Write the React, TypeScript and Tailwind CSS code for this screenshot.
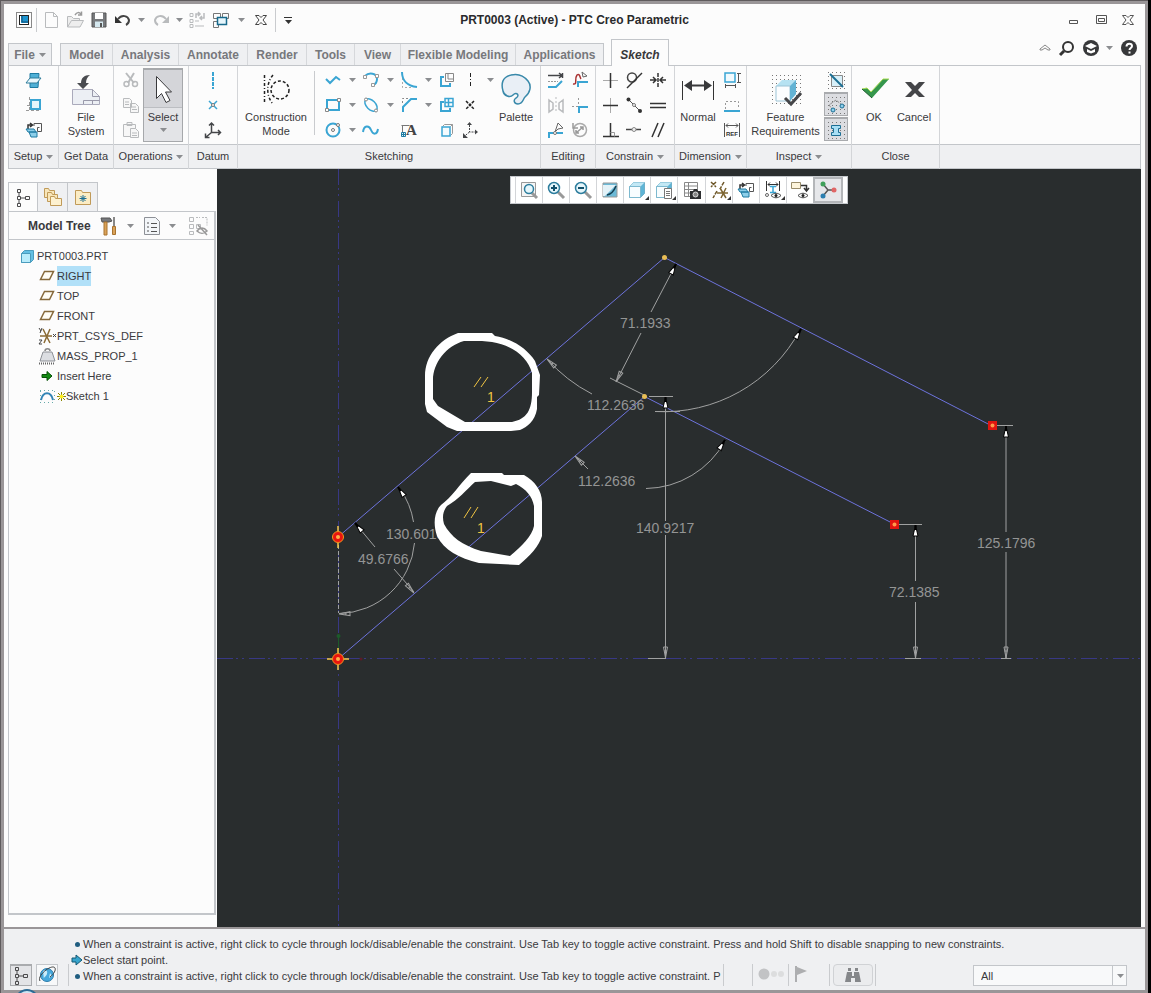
import type { ReactNode } from 'react';
import clsx from 'clsx';

interface ToolProps {
  label: string;
  children: ReactNode;
  className?: string;
}

const BLUE = '#3aa5d3';
const DARK = '#444649';
const PALE = '#b9bbbd';

function Glyph({ children, size = 20 }: { children: ReactNode; size?: number }) {
  return (
    <svg width={size} height={size} viewBox={`0 0 ${size} ${size}`} fill="none" aria-hidden="true" className="shrink-0">
      {children}
    </svg>
  );
}

function Tool({ label, children, className }: ToolProps) {
  return (
    <button type="button" aria-label={label} className={clsx('flex shrink-0 items-center justify-center', className)}>
      <Glyph>{children}</Glyph>
    </button>
  );
}

function Triangle({ dark }: { dark?: boolean }) {
  return (
    <svg width="7" height="4" viewBox="0 0 7 4" aria-hidden="true" className="shrink-0">
      <path d="M0 0h7L3.500 4z" fill={dark ? '#333' : '#8b8d90'} />
    </svg>
  );
}

function Caret({ label, dark, className }: { label: string; dark?: boolean; className?: string }) {
  return (
    <button type="button" aria-label={label} className={clsx('flex shrink-0 items-center justify-center', className ?? 'w-4')}>
      <Triangle dark={dark} />
    </button>
  );
}

function Divider({ className }: { className?: string }) {
  return <span className={clsx('w-px shrink-0 bg-[#c9cbce]', className)} />;
}

function QuickAccess() {
  return (
    <div className="flex h-8 items-center pl-2">
      <Tool label="Application" className="w-6">
        <rect x="2.500" y="2.500" width="15" height="15" stroke="#888" />
        <rect x="5.500" y="5.500" width="9" height="9" fill="#fff" stroke="#222" />
        <path d="M8 6h6v7H7V6z" fill="#1d94cf" />
        <path d="M8 6v6h6" stroke="#124d74" />
      </Tool>
      <Divider className="h-6" />
      <Tool label="New" className="ml-0.5 w-6">
        <path d="M4.500 2.500h8l4 4v11h-12zM12.500 2.500v4h4" stroke={PALE} />
      </Tool>
      <Tool label="Open" className="w-6">
        <path d="M2.500 17V6.500h4l2 2h6V11M2.500 17l4-6.500h12L15 17z" fill="#eee" stroke={PALE} />
        <path d="M10 5c2-3 4-3 6-1M16.500 1.500V5H13" stroke="#999" strokeWidth="1.500" />
      </Tool>
      <Tool label="Save" className="w-6">
        <path d="M3 3h14v14H3z" fill="#77797c" stroke="#555" />
        <path d="M6 3h8v6H6z" fill="#fff" />
        <path d="M6 11.500h8V17H6z" fill="#d5e8ef" />
        <path d="M11 13h2v4h-2z" fill="#555" />
      </Tool>
      <Tool label="Undo" className="w-6">
        <path d="M5 9C9 4 15 6 16 10c0 3-1 4-3 5" stroke="#444" strokeWidth="2" />
        <path d="M2 6v7h7z" fill="#333" />
      </Tool>
      <Caret label="Undo list" className="w-3" />
      <Tool label="Redo" className="ml-0.5 w-6">
        <path d="M15 9C11 4 5 6 4 10c0 3 1 4 3 5" stroke={PALE} strokeWidth="2" />
        <path d="M18 6v7h-7z" fill={PALE} />
      </Tool>
      <Caret label="Redo list" className="w-3" />
      <Tool label="Regenerate" className="w-6">
        <path d="M3 3.500h3v3H3zM3 9.500h3v3H3zM3 14.500h3v3H3zM8 11h4M8 16h9" stroke={PALE} />
        <path d="M9 8V4h4M11 2l2 2-2 2M17 3v5h-4M15 6l-2 2 2 2" stroke={PALE} strokeWidth="1.500" />
      </Tool>
      <Tool label="Windows" className="w-6">
        <path d="M2.500 3.500h7v5h-7zM11.500 3.500h6v5h-6zM2.500 11.500h5v6h-5z" stroke="#777" />
        <path d="M6.500 7.500h9v7h-9z" fill="#e6f6fc" stroke="#186a8c" strokeWidth="1.500" />
      </Tool>
      <Caret label="Window list" className="w-4" />
      <Tool label="Close window" className="w-6">
        <path d="M4.500 5.500h3.500l2 2 2-2h3.500l-3.500 4.500 3.500 4.500H12l-2-2-2 2H4.500L8 10z" stroke="#444" />
      </Tool>
      <Divider className="ml-0.5 h-6" />
      <button type="button" aria-label="Customize toolbar" className="flex w-6 flex-col items-center gap-0.5">
        <span className="h-px w-2 bg-[#333]" />
        <Triangle dark />
      </button>
    </div>
  );
}

function TitleBar() {
  return (
    <header className="grid h-8 grid-cols-[1fr_auto_1fr] items-center">
      <QuickAccess />
      <h1 className="text-[12px] leading-4 font-bold text-[#2a2a2c]">PRT0003 (Active) - PTC Creo Parametric</h1>
      <div className="flex items-center justify-end pr-1">
        <Tool label="Minimize" className="w-[27px]">
          <path d="M5.500 10.500h8v3h-8z" stroke="#555" />
        </Tool>
        <Tool label="Maximize" className="w-[27px]">
          <path d="M5.500 5.500h10v8h-10zM7.500 8.500h6v3h-6z" stroke="#555" />
        </Tool>
        <Tool label="Close" className="w-[27px]">
          <path d="M4.500 5.500h3.500l2 2 2-2h3.500l-3.500 4.500 3.500 4.500H12l-2-2-2 2H4.500L8 10z" stroke="#555" />
        </Tool>
      </div>
    </header>
  );
}

const tabs = [
  { name: 'Model', width: 'w-[52px]' },
  { name: 'Analysis', width: 'w-[66px]' },
  { name: 'Annotate', width: 'w-[69px]' },
  { name: 'Render', width: 'w-[59px]' },
  { name: 'Tools', width: 'w-[48px]' },
  { name: 'View', width: 'w-[46px]' },
  { name: 'Flexible Modeling', width: 'w-[115px]' },
  { name: 'Applications', width: 'w-[87px]' },
];

function TabStrip() {
  return (
    <div className="flex h-[29px] items-end pl-1 text-[12px] font-bold text-[#77787c]">
      <button type="button" className="flex h-[22px] w-11 items-center justify-center gap-1 border border-b-0 border-[#c3c6ca] bg-[#eff0f2]">
        File <Triangle />
      </button>
      <nav className="ml-2 flex h-[22px] border border-b-0 border-[#c3c6ca]">
        {tabs.map((tab) => (
          <button
            key={tab.name}
            type="button"
            className={clsx(tab.width, 'shrink-0 border-r border-[#d6d8db] bg-[#eff0f2] whitespace-nowrap last:border-r-0')}
          >
            {tab.name}
          </button>
        ))}
      </nav>
      <button
        type="button"
        className="z-10 -mb-px ml-[7px] h-[27px] w-[58px] border border-b-0 border-[#c3c6ca] bg-[#fcfcfc] pt-1 text-[#38383a] italic"
      >
        Sketch
      </button>
      <div className="ml-auto flex h-6 self-start pr-1">
        <Tool label="Collapse ribbon" className="w-5">
          <path d="M5 11l5-4 5 4v1h-2l-3-2-3 2H5z" stroke="#888" />
        </Tool>
        <Tool label="Search" className="w-6">
          <circle cx="11" cy="9" r="5" stroke="#333" strokeWidth="2" />
          <path d="M7 13l-4 4" stroke="#333" strokeWidth="3" />
        </Tool>
        <Tool label="Learning" className="w-6">
          <circle cx="10" cy="10" r="8" fill="#37383a" />
          <path d="M4 8l6-3 6 3-6 3zM6 11l4 2 4-2v3l-4 1.500L6 14z" fill="#fff" />
        </Tool>
        <Caret label="Learning menu" className="w-3" />
        <Tool label="Help" className="ml-0.5 w-6">
          <circle cx="10" cy="10" r="8" fill="#37383a" />
          <path d="M7.500 8.500c0-4 5.500-3.500 5.500-.5 0 2-2.500 2-2.500 4" stroke="#fff" strokeWidth="2" />
          <path d="M9.500 13.500h2v2h-2z" fill="#fff" />
        </Tool>
      </div>
    </div>
  );
}

interface GroupProps {
  name: string;
  width: string;
  menu?: boolean;
  children: ReactNode;
}

function Group({ name, width, menu, children }: GroupProps) {
  return (
    <section aria-label={name} className={clsx(width, 'flex shrink-0 flex-col border-r border-[#d3d5d8]')}>
      <div className="flex h-[78px] pt-px">{children}</div>
      <footer className="flex h-[25px] items-center justify-center gap-1 border-y border-[#c3c6ca] bg-[#eff0f2]">
        {name}
        {menu && <Triangle />}
      </footer>
    </section>
  );
}

function Stack({ children, className = 'w-6' }: { children: ReactNode; className?: string }) {
  return <div className={clsx('grid shrink-0 auto-rows-[25px]', className)}>{children}</div>;
}

interface BigToolProps {
  label: string;
  lines: string[];
  width: string;
  children: ReactNode;
}

function BigTool({ label, lines, width, children }: BigToolProps) {
  return (
    <button type="button" aria-label={label} className={clsx(width, 'flex shrink-0 flex-col items-center leading-[14px]')}>
      <span className="flex h-[43px] items-center">
        <Glyph size={36}>{children}</Glyph>
      </span>
      {lines.map((line) => (
        <span key={line}>{line}</span>
      ))}
    </button>
  );
}

function LayerGlyph() {
  return (
    <>
      <path d="M10 3.500h7.500v8h-4v-4h2M10 3.500v2.500" stroke="#555" />
      <path d="M4 9V5h4M6 3l2.500 2L6 7" stroke="#333" strokeWidth="1.500" />
      <path d="M2 9h8l2 3H4zM5 12h8v5H7z" fill="#8dcfea" stroke="#1e7ba2" />
    </>
  );
}

function SetupGroup() {
  return (
    <Group name="Setup" width="w-[50px]" menu>
      <Stack className="w-full justify-center">
        <Tool label="Sketch setup">
          <path d="M6 3.500h9l-1 14H6z" fill="#4fb0d6" stroke="#1e7ba2" />
          <path d="M2 13l4-5h11l-4 5z" fill="#e9f8fd" stroke="#2f7c9b" />
        </Tool>
        <Tool label="References">
          <path d="M3 10.500h14M2 15.500h14M5.500 2v14" stroke="#999" strokeDasharray="3 2" />
          <path d="M7 5h9v9H7z" fill="#e4f5fb" stroke={BLUE} strokeWidth="2" />
        </Tool>
        <Tool label="Sketch view">
          <LayerGlyph />
        </Tool>
      </Stack>
    </Group>
  );
}

function GetDataGroup() {
  return (
    <Group name="Get Data" width="w-[55px]">
      <BigTool label="File System" lines={['File', 'System']} width="w-full">
        <path d="M4.500 18.500h20l7 7v8h-27z" fill="#eceff4" stroke="#aab" />
        <path d="M24.500 18.500v7h7M15.500 33v-3.500h16M24.500 30v3" stroke="#99a" />
        <path d="M22 4c-6 0-9 3-9 8H9l6 6 6-6h-3c0-3 1-6 4-8z" fill="#4a4c50" />
      </BigTool>
    </Group>
  );
}

function OperationsGroup() {
  return (
    <Group name="Operations" width="w-[75px]" menu>
      <Stack className="ml-[5px] w-6">
        <Tool label="Cut">
          <path d="M5 3l8 10M13 3L7 13" stroke={PALE} strokeWidth="2" />
          <circle cx="5.500" cy="14" r="2.500" stroke={PALE} strokeWidth="1.500" />
          <circle cx="14" cy="14" r="2.500" stroke={PALE} strokeWidth="1.500" />
        </Tool>
        <Tool label="Copy">
          <path d="M2.500 3.500h6l2 2v7h-8zM9.500 8.500h5l3 3v6h-8z" fill="#f7f7f7" stroke={PALE} />
          <path d="M11 12h4M11 14.500h5M4 7h4M4 9.500h4" stroke={PALE} />
        </Tool>
        <Tool label="Paste">
          <path d="M2.500 4.500h12v12h-12zM6 2.500h5v3H6z" fill="#f7f7f7" stroke={PALE} />
          <path d="M9.500 8.500h5l3 3v6h-8zM11 13h5M11 15.500h5" fill="#f7f7f7" stroke={PALE} />
        </Tool>
      </Stack>
      <button
        type="button"
        className="mt-px flex h-[74px] w-10 flex-col items-center border border-t-2 border-[#a6a8ab] bg-[#e3e4e7]"
      >
        <span className="flex h-[38px] w-full items-center justify-center border-b border-[#bcbec2] bg-[#d4d5d9]">
          <Glyph size={32}>
            <path d="M9.500 3.500v22l5-5 4.500 9 4-2-4.500-8.500h6z" fill="#fff" stroke="#3a3a3c" />
          </Glyph>
        </span>
        <span className="mt-0.5 mb-1 leading-[14px]">Select</span>
        <Triangle />
      </button>
    </Group>
  );
}

function DatumGroup() {
  return (
    <Group name="Datum" width="w-[49px]">
      <Stack className="w-full justify-center">
        <Tool label="Datum centerline">
          <path d="M10 2v17" stroke={BLUE} strokeWidth="2" strokeDasharray="4 1" />
        </Tool>
        <Tool label="Datum point">
          <path d="M6 6l8 8M14 6l-8 8" stroke={BLUE} strokeWidth="1.500" />
          <circle cx="10" cy="10" r="1.500" fill="#fff" stroke="#777" />
        </Tool>
        <Tool label="Datum coordinate system">
          <path d="M8.500 3v9.500H17M8.500 12.500l-6 5M6 5.500L8.500 3 11 5.500M15 10l2.500 2.500L15 15M2.500 13.500v4h4" stroke={DARK} strokeWidth="1.500" />
        </Tool>
      </Stack>
    </Group>
  );
}

function SketchingGroup() {
  const cell = 'w-[22px]';
  return (
    <Group name="Sketching" width="w-[303px]">
      <BigTool label="Construction Mode" lines={['Construction', 'Mode']} width="w-[76px]">
        <path d="M6.500 4v29M15 4C8 12 8 25 15 33" stroke="#222" strokeWidth="1.500" strokeDasharray="3 2 1 2" />
        <circle cx="22" cy="19" r="9" stroke="#222" strokeWidth="1.500" strokeDasharray="3 2" />
      </BigTool>
      <Divider className="mt-1 mr-[7px] h-16" />
      <div className="grid auto-rows-[25px] grid-cols-[22px_16px_22px_16px_22px_16px]">
        <Tool label="Line chain" className={cell}>
          <path d="M3 9l4 4 6-6 4 3" stroke={BLUE} strokeWidth="2" />
        </Tool>
        <Caret label="Line menu" />
        <Tool label="Arc" className={cell}>
          <path d="M4 6c4-4 12-3 12 3 0 3-1 5-4 6" stroke={BLUE} strokeWidth="2" />
          <path d="M2.500 8.500h3v-3h-3zM10.500 16.500h3v-3h-3zM14.500 7.500h3v-3h-3z" fill="#fff" stroke="#999" />
        </Tool>
        <Caret label="Arc menu" />
        <Tool label="Fillet" className={cell}>
          <path d="M3.500 8v9.500H12" stroke="#aaa" strokeDasharray="2 2" />
          <path d="M3 2c0 9 6 14 15 15" stroke={BLUE} strokeWidth="2" />
        </Tool>
        <Caret label="Fillet menu" />
        <Tool label="Rectangle" className={cell}>
          <path d="M4 5h12v10H4z" stroke={BLUE} strokeWidth="2" />
          <path d="M2.500 13.500h3v3h-3zM14.500 3.500h3v3h-3z" fill="#fff" stroke="#888" />
        </Tool>
        <Caret label="Rectangle menu" />
        <Tool label="Ellipse" className={cell}>
          <ellipse cx="10" cy="10" rx="7.500" ry="4.500" transform="rotate(45 10 10)" stroke={BLUE} strokeWidth="1.500" />
          <circle cx="5" cy="4.500" r="1.500" fill="#fff" stroke="#888" />
          <circle cx="15" cy="15.500" r="1.500" fill="#fff" stroke="#888" />
        </Tool>
        <Caret label="Ellipse menu" />
        <Tool label="Chamfer" className={cell}>
          <path d="M3.500 8V3.500H10" stroke="#888" strokeDasharray="2 2" />
          <path d="M4 17v-5l8-8h6" stroke={BLUE} strokeWidth="2" />
        </Tool>
        <Caret label="Chamfer menu" />
        <Tool label="Circle" className={cell}>
          <circle cx="10" cy="10" r="6.500" stroke={BLUE} strokeWidth="2" />
          <circle cx="10" cy="10" r="1.500" stroke="#777" />
          <circle cx="15" cy="5" r="1.500" fill="#fff" stroke="#777" />
        </Tool>
        <Caret label="Circle menu" />
        <Tool label="Spline" className={cell}>
          <path d="M2 12c1-7 6-7 8-2s6 5 7-1" stroke={BLUE} strokeWidth="2" />
        </Tool>
        <span />
        <Tool label="Text" className={cell}>
          <path d="M2.500 5.500h8M3.500 5v8" stroke="#777" />
          <text x="7" y="15" fill="#444" className="font-['Liberation_Serif',serif] text-[15px] font-bold">
            A
          </text>
          <path d="M2.500 12.500h4v4h-4zM4.500 12.500v4M2.500 14.500h4" fill="#dff3fa" stroke="#1e7ba2" />
        </Tool>
      </div>
      <Stack className={cell}>
        <Tool label="Offset" className={cell}>
          <path d="M8.500 3.500h8v8h-8zM11 3.500V9h5.500" stroke="#888" />
          <path d="M7 7H4v9h9v-3" stroke={BLUE} strokeWidth="2" />
        </Tool>
        <Tool label="Thicken" className={cell}>
          <path d="M8 3.500h8v8H8zM11.500 4v7M8 7.500h8" stroke={BLUE} strokeWidth="1.500" />
          <path d="M7 7H4v9h9v-3" stroke={BLUE} strokeWidth="2" />
        </Tool>
        <Tool label="Project" className={cell}>
          <path d="M5.500 6.500l2-2h8v9l-2 2M13.500 6.500l2-2" stroke="#999" />
          <path d="M5 7h8v9H5z" fill="#f4fbfe" stroke={BLUE} strokeWidth="1.500" />
        </Tool>
      </Stack>
      <Stack className="w-6">
        <Tool label="Centerline">
          <path d="M10.500 3v15" stroke="#222" strokeDasharray="4 2 1 2" />
        </Tool>
        <Tool label="Point">
          <path d="M6 6l8 8M14 6l-8 8" stroke="#222" strokeWidth="1.500" strokeDasharray="3 1" />
        </Tool>
        <Tool label="Coordinate system">
          <path d="M9.500 5v7h7M9.500 12l-6 5" stroke={DARK} strokeDasharray="2 1" />
          <path d="M7 5l2.500-3L12 5zM15 9.500l3 2.500-3 2.500zM3 13v5h5z" fill={DARK} />
        </Tool>
      </Stack>
      <div className="flex h-[25px]">
        <Caret label="Centerline menu" />
      </div>
      <BigTool label="Palette" lines={['Palette']} width="-ml-0.5 w-10">
        <path
          d="M13 4c8-2 13 1 17 6 4 5 2 12-3 16-2 2-2 7-7 7-4 0-5-4-2-6 4-2 1-7-3-3-3 3-9 1-10-4C3 13 4 6 13 4z"
          fill="#e9eff6"
          stroke="#3989aa"
          strokeWidth="1.500"
        />
      </BigTool>
    </Group>
  );
}

function EditingGroup() {
  return (
    <Group name="Editing" width="w-[55px]">
      <div className="ml-[3px] grid auto-rows-[25px] grid-cols-[24px_24px]">
        <Tool label="Modify">
          <path d="M2 5.500h14M16.500 3v5M13 3l3 2.500L13 8" stroke={DARK} strokeWidth="1.500" />
          <path d="M2 11.500h10" stroke="#999" strokeDasharray="2 1" />
          <path d="M2 17h8l6-6" stroke={BLUE} strokeWidth="2" />
        </Tool>
        <Tool label="Delete segment">
          <path d="M3 14c5 1 1-5 4-9 3-2 3 3 4 4" stroke="#a33" strokeWidth="1.500" />
          <path d="M12 2l5 4-4 1z" stroke="#666" />
          <path d="M8 17v-5h10" stroke={BLUE} strokeWidth="2" />
        </Tool>
        <Tool label="Mirror">
          <path d="M10 2v16" stroke={PALE} strokeDasharray="2 2" />
          <path d="M3 5l4 3v6l-4 3zM17 5l-4 3v6l4 3z" stroke={PALE} strokeWidth="1.500" />
        </Tool>
        <Tool label="Corner">
          <path d="M2 11.500h7M8.500 3v8" stroke="#999" strokeDasharray="2 2" />
          <path d="M9 18v-6h9" stroke={BLUE} strokeWidth="2" />
        </Tool>
        <Tool label="Divide">
          <path d="M3 18v-5h14" stroke={BLUE} strokeWidth="2" />
          <path d="M9 12l3-9 5 5-5 1z" stroke="#666" />
          <circle cx="9" cy="13" r="1.500" fill="#fff" stroke="#777" />
        </Tool>
        <Tool label="Rotate resize">
          <circle cx="10" cy="10" r="6.500" stroke="#aaa" strokeWidth="1.500" />
          <path d="M6 13l7-6M3 3v5h5M10 7h3v3M6 10v3h3" stroke="#999" strokeWidth="1.500" />
        </Tool>
      </div>
    </Group>
  );
}

function ConstrainGroup() {
  return (
    <Group name="Constrain" width="w-[79px]" menu>
      <div className="ml-0.5 grid auto-rows-[25px] grid-cols-[24px_24px_24px]">
        <Tool label="Vertical">
          <path d="M3 10.500h15" stroke="#aaa" />
          <path d="M10.500 3v15" stroke="#333" strokeWidth="1.500" />
        </Tool>
        <Tool label="Tangent">
          <circle cx="8" cy="7.500" r="4.500" stroke="#444" strokeWidth="1.500" />
          <path d="M3 18L18 3" stroke="#333" strokeWidth="1.500" />
        </Tool>
        <Tool label="Symmetric">
          <path d="M10 3v15" stroke="#333" strokeWidth="1.500" strokeDasharray="4 1" />
          <path d="M2 10h6M18 10h-6M5 7l3 3-3 3M15 7l-3 3 3 3" stroke="#333" strokeWidth="1.500" />
        </Tool>
        <Tool label="Horizontal">
          <path d="M10.500 3v15" stroke="#aaa" />
          <path d="M3 10.500h15" stroke="#333" strokeWidth="1.500" />
        </Tool>
        <Tool label="Mid-point">
          <path d="M4 4l12 12" stroke="#555" />
          <circle cx="4.500" cy="4.500" r="2" fill="#333" />
          <circle cx="16" cy="16" r="2" fill="#333" />
          <circle cx="10" cy="10" r="1.500" fill="#fff" stroke="#777" />
        </Tool>
        <Tool label="Equal">
          <path d="M2 8.500h16M2 12.500h16" stroke="#333" strokeWidth="1.500" />
        </Tool>
        <Tool label="Perpendicular">
          <path d="M3 16.500h16M10.500 3v13" stroke="#333" strokeWidth="1.500" />
          <path d="M10.500 12.500h4v4" stroke="#999" />
        </Tool>
        <Tool label="Coincident">
          <path d="M2 9.500h15" stroke="#444" strokeWidth="1.500" />
          <circle cx="10" cy="9.500" r="2" fill="#eee" stroke="#888" />
        </Tool>
        <Tool label="Parallel">
          <path d="M4 17l6-14M10 17l6-14" stroke="#333" strokeWidth="1.500" />
        </Tool>
      </div>
    </Group>
  );
}

function DimensionGroup() {
  return (
    <Group name="Dimension" width="w-[72px]" menu>
      <BigTool label="Normal" lines={['Normal']} width="ml-px w-11">
        <path d="M2.500 10v19M33.500 10v19" stroke="#333" />
        <path d="M8 14.500h20" stroke="#38393b" strokeWidth="2" />
        <path d="M4 14.500l8-5.500v11zM32 14.500L24 9v11z" fill="#38393b" />
      </BigTool>
      <Stack className="w-6">
        <Tool label="Perimeter">
          <path d="M3 3h10v9H3z" fill="#f2fafd" stroke={BLUE} strokeWidth="1.500" />
          <path d="M16.500 3v9M15 3.500h4M15 12.500h4M3 15.500h10M3.500 14v4M13.500 14v4" stroke="#555" />
        </Tool>
        <Tool label="Baseline">
          <path d="M3.500 14V6.500h13V14" stroke="#999" strokeDasharray="2 2" />
          <path d="M2 16h16" stroke={BLUE} strokeWidth="2" />
        </Tool>
        <Tool label="Reference">
          <path d="M2.500 3v14M17.500 3v14M4 5.500h12M6 3.500l-2 2 2 2M14 3.500l2 2-2 2" stroke="#555" />
          <text x="4" y="16" fill="#333" className="font-['Liberation_Sans',sans-serif] text-[6px] font-bold">
            REF
          </text>
        </Tool>
      </Stack>
    </Group>
  );
}

function DotField({ from, to }: { from: number; to: number }) {
  const rows = [];
  for (let y = from; y <= to; y += 4) {
    rows.push(<path key={y} d={`M${from} ${y + 0.5}H${to + 1}`} stroke="#777" strokeDasharray="1 3" />);
  }
  return <>{rows}</>;
}

function InspectGroup() {
  const pressed = 'h-6 border border-t-2 border-[#a9abae] bg-[#dcdde1]';
  return (
    <Group name="Inspect" width="w-[105px]" menu>
      <BigTool label="Feature Requirements" lines={['Feature', 'Requirements']} width="w-[77px]">
        <DotField from={4} to={32} />
        <path d="M8 15l6-6h14v14l-6 7H8z" fill="#b6e2f2" />
        <path d="M8 15h14v15H8z" fill="#fbfdff" stroke="#9cc4d6" />
        <path d="M22 15l6-6v14l-6 7z" fill="#63b3d4" />
        <path d="M17 27l6 6 10-11" stroke="#454649" strokeWidth="3" />
      </BigTool>
      <Stack className="w-6">
        <Tool label="Shade closed loops">
          <DotField from={2} to={18} />
          <path d="M5.500 5.500h11v11h-11z" fill="#d8f0f9" stroke="#888" />
          <path d="M4 4l13 13" stroke="#1c6f94" strokeWidth="2" />
        </Tool>
        <Tool label="Highlight open ends" className={pressed}>
          <DotField from={2} to={18} />
          <path d="M7 15l-4-5 7-5 6 5" stroke="#888" strokeDasharray="3 1" />
          <circle cx="7" cy="15" r="2" fill="#8fd0ec" stroke="#1c6f94" />
          <circle cx="16" cy="11" r="2" fill="#8fd0ec" stroke="#1c6f94" />
        </Tool>
        <Tool label="Overlapping geometry" className={pressed}>
          <DotField from={2} to={18} />
          <path d="M5.500 5.500h9v3h-2v4h2v3h-9v-3h2v-4h-2z" fill="#a8dff5" stroke="#1c6f94" />
        </Tool>
      </Stack>
    </Group>
  );
}

function CloseGroup() {
  return (
    <Group name="Close" width="w-[88px]">
      <BigTool label="OK" lines={['OK']} width="ml-0.5 w-10">
        <path d="M6 18l5-1 4 4L27 8h6L16 27z" fill="#35964c" />
        <path d="M6 18l5-1 4 4L27 8h6" stroke="#a9dc55" />
        <path d="M6 18l10 9" stroke="#1f5c2e" />
      </BigTool>
      <BigTool label="Cancel" lines={['Cancel']} width="w-10">
        <path d="M9 11h6l4 4 4-4h6l-7 8 7 7h-6l-4-4-4 4H9l7-7z" fill="#444548" />
      </BigTool>
    </Group>
  );
}

function Ribbon() {
  return (
    <div className="mx-1 flex border-x border-t border-[#c3c6ca] text-[11px] text-[#3a3a3d]">
      <SetupGroup />
      <GetDataGroup />
      <OperationsGroup />
      <DatumGroup />
      <SketchingGroup />
      <EditingGroup />
      <ConstrainGroup />
      <DimensionGroup />
      <InspectGroup />
      <CloseGroup />
      <div className="flex flex-1 flex-col justify-end">
        <div className="h-[25px] border-y border-[#c3c6ca] bg-[#eff0f2]" />
      </div>
    </div>
  );
}

function TreeGlyph() {
  return (
    <path
      d="M4.500 1.500h3v3h-3zM4.500 8.500h3v3h-3zM4.500 15.500h3v3h-3zM12.500 8.500h4v3h-4zM6 5v3M6 12v3M8 10h4"
      stroke="#4a4a4c"
    />
  );
}

function PlaneGlyph() {
  return <path d="M7.500 5.500h9l-4 8h-9z" fill="#fffdf4" stroke="#85683a" strokeWidth="1.500" />;
}

const treeItems: { name: string; glyph: ReactNode; selected?: boolean; fresh?: boolean }[] = [
  { name: 'RIGHT', glyph: <PlaneGlyph />, selected: true },
  { name: 'TOP', glyph: <PlaneGlyph /> },
  { name: 'FRONT', glyph: <PlaneGlyph /> },
  {
    name: 'PRT_CSYS_DEF',
    glyph: (
      <>
        <path d="M6 3l7 14M13 3L7 17M3 10h12" stroke="#8b6b34" strokeWidth="1.500" />
        <path d="M16 8l3 3M19 8l-3 3M2 2l2 3M5 2L3 7M2 14h3l-3 4h3" stroke="#444" />
      </>
    ),
  },
  {
    name: 'MASS_PROP_1',
    glyph: (
      <>
        <path d="M8 5c0-3 5-3 5 0" stroke="#888" strokeWidth="1.500" />
        <path d="M6 6h9l3 9H3z" fill="#dcdee2" stroke="#8d9096" />
        <path d="M2 17.500h16" stroke="#666" strokeWidth="2" strokeDasharray="1 1" />
      </>
    ),
  },
  {
    name: 'Insert Here',
    glyph: <path d="M5 8.500h5v-3l5 4.500-5 4.500v-3H5z" fill="#128a12" stroke="#075007" />,
  },
  {
    name: 'Sketch 1',
    glyph: (
      <>
        <path d="M3 4.500h15M3 16.500h15M3.500 5v12M17.500 5v12" stroke="#6aa" strokeDasharray="1 3" />
        <path d="M4 14c2-9 10-9 12 0" stroke="#3184b5" strokeWidth="2" />
      </>
    ),
    fresh: true,
  },
];

function ModelTree() {
  return (
    <aside className="flex w-[213px] shrink-0 flex-col py-3 pr-px pl-1 text-[11px] text-[#3a3a3d]">
      <div className="mt-px -mb-px flex h-[30px]">
        <Tool label="Model tree tab" className="w-[30px] border border-b-0 border-[#c3c6ca] bg-[#fcfcfc]">
          <TreeGlyph />
        </Tool>
        <Tool label="Folder browser" className="w-[30px] border border-l-0 border-[#c3c6ca] bg-[#eff0f2]">
          <path d="M1.500 1.500h4l1 2h5v7h-10z" fill="#f8e6ba" stroke="#c09a58" />
          <path d="M4.500 5.500h4l1 2h5v7h-10z" fill="#f8e6ba" stroke="#c09a58" />
          <path d="M7.500 9.500h4l1 2h6v7h-11z" fill="#fdf1d0" stroke="#c09a58" />
        </Tool>
        <Tool label="Favorites" className="w-[30px] border border-l-0 border-[#c3c6ca] bg-[#eff0f2]">
          <path d="M2.500 3.500h6l1 2h8v12h-15z" fill="#fbecc4" stroke="#c09a58" />
          <path d="M10 8v7M6.500 11.500h7M7.500 9l5 5M12.500 9l-5 5" stroke="#1c6f94" />
        </Tool>
      </div>
      <div className="flex-1 border border-r-2 border-b-2 border-[#c3c6ca]">
        <div className="flex h-7 items-center border-b border-[#c3c6ca] pl-[19px]">
          <h2 className="w-[72px] text-[12px] leading-4 font-bold whitespace-nowrap">Model Tree</h2>
          <Tool label="Settings" className="w-5">
            <path d="M1 2h9l2 3-3 1H2z" fill="#77797c" stroke="#555" />
            <path d="M4 6h3v13H4z" fill="#d9a259" stroke="#a8732f" />
            <path d="M14 1v9" stroke="#888" strokeWidth="2" />
            <path d="M12.500 10.500h3v8h-3z" fill="#d9a259" stroke="#a8732f" />
          </Tool>
          <Caret label="Settings menu" className="w-5" />
          <Tool label="Show" className="w-6">
            <path d="M2.500 1.500h11l4 4v13h-15z" fill="#f3f6f9" stroke="#8d9096" />
            <path d="M5 7h2M5 11h2M5 15h2M9 7.500h6M9 11.500h6M9 15.500h6" stroke="#555" />
          </Tool>
          <Caret label="Show menu" className="w-4" />
          <Tool label="Hide items" className="ml-2 w-5">
            <path d="M1.500 1.500h4v4h-4zM1.500 8.500h4v4h-4zM1.500 15.500h4v3h-4zM8.500 8.500h4v4h-4z" stroke={PALE} />
            <path d="M8 1.500h4M14 1.500h5v8" stroke={PALE} strokeDasharray="2 1" />
            <path d="M9 15c3-4 7-4 10 0-3 3-7 3-10 0zM10 9l9 10" stroke="#999" strokeWidth="1.500" />
          </Tool>
        </div>
        <ul className="pt-1.5 pl-2 leading-5">
          <li>
            <div className="flex h-5 items-center">
              <Glyph>
                <path d="M4.500 7.500l3-3h9v9l-3 3h-9z" fill="#62bfe3" stroke="#4b9cbd" />
                <path d="M4.500 7.500h9v9h-9z" fill="#b9ecfb" stroke="#4b9cbd" />
              </Glyph>
              PRT0003.PRT
            </div>
            <ul className="pl-5">
              {treeItems.map((item) => (
                <li key={item.name} className="flex h-5 items-center">
                  <Glyph>{item.glyph}</Glyph>
                  {item.fresh && (
                    <svg width="9" height="9" viewBox="0 0 9 9" aria-hidden="true">
                      <path d="M4.500 0v9M0 4.500h9M1 1l7 7M8 1L1 8" stroke="#8a8500" />
                      <circle cx="4.500" cy="4.500" r="2" fill="#ffef1f" />
                    </svg>
                  )}
                  <span className={clsx(item.selected && 'bg-[#b1e0f8]')}>{item.name}</span>
                </li>
              ))}
            </ul>
          </li>
        </ul>
      </div>
    </aside>
  );
}

function Cube() {
  return (
    <>
      <path d="M2.500 6.500l4-4h11v11l-4 4h-11z" fill="#5fb5d6" stroke="#6fb0c9" />
      <path d="M2.500 6.500l4-4h11l-4 4z" fill="#c3e8f5" />
      <path d="M2.500 6.500h11v11h-11z" fill="#f8fdff" stroke="#7db9cf" />
    </>
  );
}

function Lens({ sign }: { sign: string }) {
  return (
    <>
      <path d="M12 12l6 6" stroke="#999" strokeWidth="3" />
      <circle cx="8" cy="8" r="5.500" fill="#e6f6fb" stroke="#2d7d9d" strokeWidth="1.500" />
      <path d={sign} stroke="#12506b" strokeWidth="2" />
    </>
  );
}

const viewTools: { label: string; glyph: ReactNode; menu?: boolean }[] = [
  {
    label: 'Refit',
    glyph: (
      <>
        <path d="M2.500 2.500h14v14h-14z" fill="#f5f5f5" stroke="#999" />
        <path d="M13 13l5 5" stroke="#999" strokeWidth="3" />
        <circle cx="10" cy="9" r="4.500" fill="#e6f6fb" stroke="#2d7d9d" strokeWidth="1.500" />
      </>
    ),
  },
  { label: 'Zoom in', glyph: <Lens sign="M5 8h6M8 5v6" /> },
  { label: 'Zoom out', glyph: <Lens sign="M5 8h6" /> },
  {
    label: 'Repaint',
    glyph: (
      <>
        <path d="M3 3h14v14H3z" fill="#6bb9d6" stroke="#999" />
        <path d="M3 5h13L5 16H3z" fill="#e3f2f8" />
        <path d="M7 15c5-1 7-4 9-9" stroke="#143f52" strokeWidth="1.500" />
      </>
    ),
  },
  { label: 'Display style', glyph: <Cube />, menu: true },
  {
    label: 'Saved orientations',
    glyph: (
      <>
        <Cube />
        <path d="M10.500 8.500h7v10h-7z" fill="#fff" stroke="#777" />
        <path d="M12 11.500h4M12 13.500h4M12 15.500h4" stroke="#777" />
      </>
    ),
    menu: true,
  },
  {
    label: 'View manager',
    glyph: (
      <>
        <path d="M2.500 2.500h13v14h-13zM2.500 6h13M2.500 9.500h13M2.500 13h13M6.500 2.500v14" stroke="#888" />
        <path d="M8 11h3l1-2h3l1 2h3v8H8z" fill="#2e2f31" />
        <circle cx="13.500" cy="14.500" r="2.500" fill="#888" stroke="#ddd" />
      </>
    ),
  },
  {
    label: 'Datum display',
    glyph: (
      <>
        <path d="M2 2l5 5M7 2L2 7M15 2l-4 7M8 11l-4 7" stroke="#6d5628" strokeWidth="1.500" strokeDasharray="4 1" />
        <path d="M8 13h11M11 8l6 10M17 8l-5 10" stroke="#7d6532" strokeWidth="1.500" />
      </>
    ),
    menu: true,
  },
  { label: 'Sketch orientation', glyph: <LayerGlyph /> },
  {
    label: 'Sketcher display',
    glyph: (
      <>
        <path d="M3.500 1v10M16.500 1v10M5 4.500h10M7 2.500l-2 2 2 2M13 2.500l2 2-2 2" stroke="#333" />
        <path d="M7 6.500h6M10 7v5M7 12.500h6" stroke={BLUE} strokeWidth="1.500" />
        <circle cx="4" cy="15" r="1.500" stroke="#666" />
        <path d="M8 15.500c3-3 7-3 10 0-3 3-7 3-10 0z" stroke="#444" />
        <circle cx="13" cy="15.500" r="1.500" fill="#222" />
      </>
    ),
    menu: true,
  },
  {
    label: 'Annotation display',
    glyph: (
      <>
        <path d="M1.500 2.500h9v6h-9z" fill="#fdf4dc" stroke="#998c6b" />
        <path d="M11 5.500h5.500V10M14 8l2.500 3L19 8" stroke="#333" strokeWidth="1.500" />
        <path d="M8 15.500c3-3 7-3 10 0-3 3-7 3-10 0z" stroke="#444" />
        <circle cx="13" cy="15.500" r="1.500" fill="#222" />
      </>
    ),
  },
];

function ViewToolbar() {
  return (
    <div className="absolute inset-x-0 top-[7px] flex justify-center">
      <div role="toolbar" aria-label="View" className="flex h-7 w-[338px] border border-[#c6c9cd] bg-white px-1">
        {viewTools.map((tool) => (
          <button
            key={tool.label}
            type="button"
            aria-label={tool.label}
            className="relative flex flex-1 items-center justify-center border-l border-[#d3d5d8]"
          >
            <Glyph>{tool.glyph}</Glyph>
            {tool.menu && (
              <svg width="4" height="4" className="absolute right-px bottom-[3px]" aria-hidden="true">
                <path d="M4 0v4H0z" fill="#333" />
              </svg>
            )}
          </button>
        ))}
        <button
          type="button"
          aria-label="Spin center"
          className="flex flex-1 items-center justify-center border-2 border-[#b4b6b9] bg-[#e6e7ea]"
        >
          <Glyph>
            <path d="M5 4l5 6-5 6M10 10h7" stroke="#555" strokeWidth="1.500" />
            <circle cx="5" cy="4" r="2.500" fill="#3fa05a" />
            <circle cx="5" cy="16" r="2.500" fill="#2c7fb0" />
            <circle cx="16" cy="10" r="2.500" fill="#e06666" />
          </Glyph>
        </button>
      </div>
    </div>
  );
}

interface ArrowProps {
  x: number;
  y: number;
  angle: number;
  active?: boolean;
}

// Points up at angle 0, with the tip on (x, y).
function Arrow({ x, y, angle, active }: ArrowProps) {
  return (
    <g transform={`translate(${x} ${y}) rotate(${angle})`}>
      {active ? (
        <>
          <path d="M0 0L2.500 11h-5z" fill="#fff" stroke="#000" />
          <path d="M0 0v5" stroke="#000" strokeWidth="2" />
        </>
      ) : (
        <path d="M0 0L2 11h-4zM-1.500 7h3" stroke="#a0a1a1" fill="none" />
      )}
    </g>
  );
}

function Anchor({ x, y, wide }: { x: number; y: number; wide?: boolean }) {
  const arm = wide ? 11 : 6;
  return (
    <g>
      <path d={`M${x} ${y - 11}v22M${x - arm} ${y}h${arm * 2}`} stroke="#f5c84c" strokeWidth="1.500" />
      <circle cx={x} cy={y} r="5.500" fill="#e9140e" stroke="#f0921e" />
      <circle cx={x} cy={y} r="2" fill="#ffb04a" />
    </g>
  );
}

function EndPoint({ x, y }: { x: number; y: number }) {
  return (
    <g>
      <rect x={x - 4.5} y={y - 4.5} width="9" height="9" fill="#e01510" />
      <circle cx={x} cy={y} r="2" fill="#ff9a4a" />
    </g>
  );
}

const dimensions = [
  { x: 620, y: 328, value: '71.1933' },
  { x: 587, y: 410, value: '112.2636' },
  { x: 578, y: 486, value: '112.2636' },
  { x: 636, y: 533, value: '140.9217' },
  { x: 889, y: 597, value: '72.1385' },
  { x: 977, y: 548, value: '125.1796' },
  { x: 386, y: 539, value: '130.6013' },
  { x: 358, y: 564, value: '49.6766' },
];

function SketchCanvas() {
  return (
    <svg className="absolute inset-0 h-full w-full" fill="none" role="img" aria-label="Linkage sketch">
      <g transform="translate(-217 -169)" className="font-['Liberation_Sans',sans-serif] text-[14px]">
        <g stroke="#383884" strokeDasharray="16 3 2 4 2 5">
          <path d="M338.500 169V3000" />
          <path d="M217 658.500H4000" />
        </g>
        <path d="M338.500 545v68" stroke="#a0a1a1" strokeDasharray="4 2" />
        <path d="M338.500 636v16" stroke="#1c5a2a" />
        <circle cx="338.500" cy="636" r="2" fill="#1c5a2a" />
        <circle cx="361" cy="659" r="1.500" fill="#5c1a26" />

        <path d="M338 537L664.500 257.500 992 426M338 659L644.500 396.500 894 524" stroke="#6d73dc" />

        <g stroke="#a0a1a1">
          <path d="M675 266l-24 46M641 333l-25 49M610 378l34 17" />
          <path d="M547 359A155 155 0 0 0 592 394M655 411.500A155 155 0 0 0 800 330M655 411.500h25" />
          <path d="M575 456l13 13M646 488.500A92 92 0 0 0 725 441" />
          <path d="M400 489A77 77 0 0 1 413.500 522M414.500 543A77 77 0 0 1 339 613.500" />
          <path d="M355 523l20 24M394 569l20 23" />
          <path d="M649 396.500h24M665.500 397v124M665.500 535v123M648 658.500h18" />
          <path d="M899 524.500h23M915.500 525v56M915.500 602v56M905 658.500h16" />
          <path d="M997 425.500h16M1006 426v106M1006 552v106M1001 658.500h10" />
        </g>

        <Arrow x={676} y={264} angle={27} active />
        <Arrow x={616} y={382} angle={207} />
        <Arrow x={801} y={329} angle={30} active />
        <Arrow x={547} y={359} angle={-47} />
        <Arrow x={725} y={440} angle={32} active />
        <Arrow x={575} y={456} angle={-45} />
        <Arrow x={398} y={487} angle={-34} active />
        <Arrow x={355} y={523} angle={-40} active />
        <Arrow x={414} y={593} angle={140} />
        <Arrow x={339} y={614} angle={-92} />
        <Arrow x={665.5} y={397} angle={0} active />
        <Arrow x={665.5} y={658} angle={180} />
        <Arrow x={915.5} y={525} angle={0} active />
        <Arrow x={915.5} y={658} angle={180} />
        <Arrow x={1006} y={426} angle={0} active />
        <Arrow x={1006} y={658} angle={180} />

        {dimensions.map((dim) => (
          <text key={`${dim.x}-${dim.y}`} x={dim.x} y={dim.y} fill="#949595">
            {dim.value}
          </text>
        ))}

        <circle cx="664.500" cy="257.500" r="2.500" fill="#e8bd55" />
        <circle cx="644.500" cy="396.500" r="2.500" fill="#e8bd55" />
        <Anchor x={338} y={537} />
        <Anchor x={338} y={659} wide />
        <EndPoint x={992.5} y={425.5} />
        <EndPoint x={894.5} y={524.5} />

        <g stroke="#f0c443">
          <path d="M474 387l7-10M481 387l7-10M464 518l7-11M471 518l7-11" />
        </g>
        <text x="487" y="402" fill="#f0c443">
          1
        </text>
        <text x="477" y="533" fill="#f0c443">
          1
        </text>

        <g fill="#fff" fillRule="evenodd">
          <path d="M458 333h34l3 3c18 3 32 13 40 25l5 14-1 20-2 2v12c-2 12-10 18-17 21l-9 1h-54l-10-4-20-15-2-8v-28c0-20 14-36 33-43zM464 341c-18 5-31 22-31 39v19l5 7 27 16h47c15-3 20-12 20-30v-19c-4-16-20-28-40-31l-10-1z" />
          <path d="M471 473h31l2 2h20c11 6 18 16 18 27v34c-3 10-12 20-23 29l-40-2c-20-5-35-13-42-27-4-12-3-24 4-31 10-7 18-20 30-32zM475 482c-9 8-16 17-28 24-4 5-5 11-3 18 7 13 18 21 37 27l29 5c12-10 22-20 24-30v-20c-2-10-8-17-18-22l-5 2-20-5z" />
        </g>
      </g>
    </svg>
  );
}

function StatusBar() {
  return (
    <footer className="flex h-[63px] shrink-0 border-t-2 border-[#9a9698] bg-[#eff0f2] text-[11px] leading-4 text-[#3a3a3d]">
      <div className="flex w-[65px] shrink-0 items-end gap-1 pb-1 pl-1.5">
        <Tool label="Toggle model tree" className="size-[22px] border border-t-2 border-[#a9abae] bg-[#e3e4e7]">
          <TreeGlyph />
        </Tool>
        <Tool label="Toggle browser" className="size-[22px] border border-[#c3c6ca] bg-[#f7f8f9]">
          <circle cx="10" cy="10" r="6.500" fill="#45a8dc" stroke="#2b7cab" />
          <path d="M6 6c3-2 5 0 4 3s-4 3-3 6M13 8l2 3-3 2" fill="#c9ecfb" />
          <path d="M3 16c-2-3 2-8 6-11s8-4 9-2-1 6-5 9" stroke="#444" />
        </Tool>
        <Divider className="ml-1.5 h-[22px]" />
      </div>
      <div className="min-w-0 flex-1 pt-[7px] whitespace-nowrap">
        <p className="flex items-center">
          <span className="mr-[3px] ml-1.5 size-[5px] shrink-0 rounded-full bg-[#1f5d80]" />
          When a constraint is active, right click to cycle through lock/disable/enable the constraint. Use Tab key to toggle
          active constraint. Press and hold Shift to disable snapping to new constraints.
        </p>
        <p className="flex items-center">
          <svg width="14" height="14" viewBox="0 0 14 14" aria-hidden="true" className="shrink-0">
            <path d="M3 5h4V2l6 5-6 5V9H3z" fill="#36a4cc" stroke="#135875" />
          </svg>
          Select start point.
        </p>
        <p className="flex items-center">
          <span className="mr-[3px] ml-1.5 size-[5px] shrink-0 rounded-full bg-[#1f5d80]" />
          When a constraint is active, right click to cycle through lock/disable/enable the constraint. Use Tab key to toggle
          active constraint. P
        </p>
      </div>
      <div className="flex shrink-0 items-end pr-[18px] pb-1">
        <Divider className="mr-7 h-[22px]" />
        <Divider className="h-[22px]" />
        <svg width="35" height="22" viewBox="0 0 35 22" aria-hidden="true">
          <circle cx="11" cy="10" r="5.500" fill="#c2c3c5" />
          <circle cx="21" cy="10" r="3" fill="#dcddde" />
          <circle cx="28" cy="10" r="3" fill="#dcddde" />
        </svg>
        <Divider className="h-[22px]" />
        <svg width="40" height="22" viewBox="0 0 40 22" aria-hidden="true">
          <path d="M6 2h2v16H6zM8 3l10 4-10 4z" fill="#adaeb0" />
        </svg>
        <Divider className="mr-[3px] h-[22px]" />
        <Tool label="Find" className="h-[22px] w-10 rounded-sm border border-[#d0d2d5] bg-[#ebecee]">
          <path d="M5 3h3v3H5zM12 3h3v3h-3zM4 7h5v4h2V7h5l2 10h-6v-4H8v4H2z" fill="#85878a" />
        </Tool>
        <Divider className="ml-0.5 h-[22px]" />
        <div className="relative ml-[97px] flex">
          <select
            aria-label="Selection filter"
            defaultValue="All"
            className="h-[21px] w-[154px] appearance-none border border-[#c3c6ca] bg-[#f8f9fa] pl-[7px] text-[11px]"
          >
            <option>All</option>
          </select>
          <span className="pointer-events-none absolute inset-y-0 right-0 flex w-[15px] items-center justify-center border-l border-[#c3c6ca]">
            <Triangle />
          </span>
        </div>
      </div>
    </footer>
  );
}

export default function App() {
  return (
    <div className="bg-black pr-[3px] font-['Liberation_Sans',Arial,sans-serif]">
      <div className="relative flex min-h-screen flex-col overflow-hidden border-t border-l border-[#5f5b5d]">
        <div className="flex flex-1 flex-col border-[3px] border-[#9a9698] bg-[#fcfcfc]">
          <TitleBar />
          <TabStrip />
          <Ribbon />
          <div className="flex flex-1">
            <ModelTree />
            <main className="relative mr-1 min-w-0 flex-1 overflow-hidden bg-[#292d2e]">
              <SketchCanvas />
              <ViewToolbar />
            </main>
          </div>
          <StatusBar />
        </div>
        <span className="absolute -bottom-5 left-3.5 size-6 rounded-full border-2 border-[#2d6b96] bg-[#cfe6f4]" />
      </div>
    </div>
  );
}
